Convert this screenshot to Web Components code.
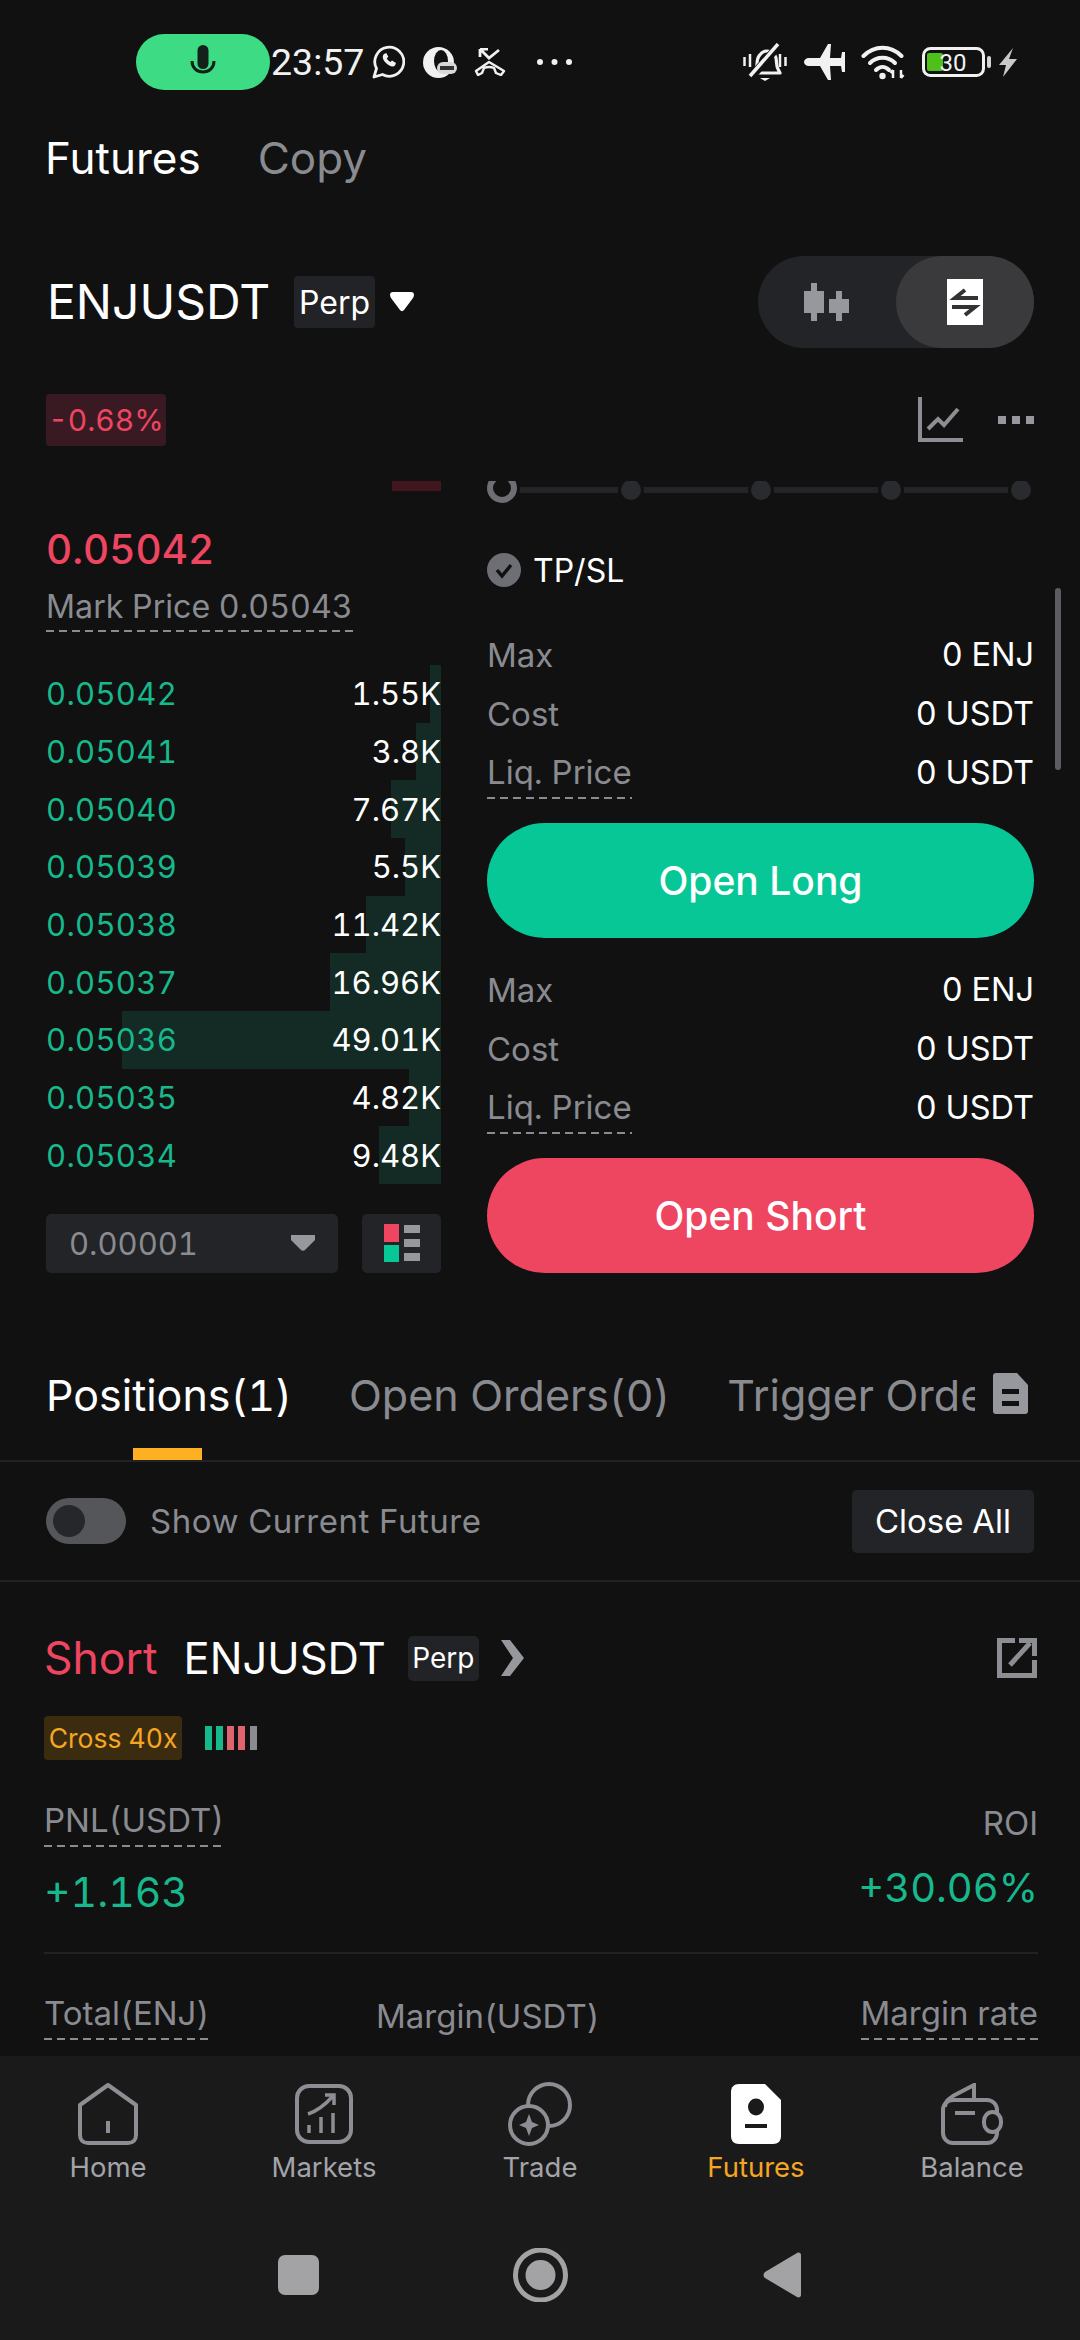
<!DOCTYPE html>
<html lang="en">
<head>
<meta charset="utf-8">
<title>Futures</title>
<style>
  html, body { margin: 0; padding: 0; background: #111112; }
  body { width: 1080px; height: 2340px; overflow: hidden; font-family: Inter, "Noto Sans", sans-serif; font-variant-numeric: tabular-nums; color: #fff; }
  app-shell { height: 2340px; }
</style>
</head>
<body>
<app-shell>
  <status-bar></status-bar>
  <top-tabs></top-tabs>
  <pair-header></pair-header>
  <trade-area></trade-area>
  <position-tabs></position-tabs>
  <position-filter></position-filter>
  <position-card></position-card>
  <bottom-nav slot="footer"></bottom-nav>
  <system-nav slot="footer"></system-nav>
</app-shell>

<script>
// shared bits
const DASH = 'background: repeating-linear-gradient(90deg, #8a8b90 0 8px, transparent 8px 13px) left bottom / 100% 2px no-repeat;';

class BaseElement extends HTMLElement {
  constructor() {
    super();
    this.attachShadow({ mode: 'open' });
  }
  connectedCallback() {
    this.shadowRoot.innerHTML = `<style>${this.styles()}</style>${this.markup()}`;
  }
  styles() { return ':host { display: block; }'; }
  markup() { return '<slot></slot>'; }
}

class AppShell extends BaseElement {
  styles() {
    return `
      :host { display: flex; flex-direction: column; }
      .body { height: 2056px; overflow: hidden; flex: none; }
      .foot { flex: 1; background: #1a1a1b; }
    `;
  }
  markup() {
    return `<div class="body"><slot></slot></div><div class="foot"><slot name="footer"></slot></div>`;
  }
}

class StatusBar extends BaseElement {
  styles() {
    return `
      :host { display: flex; align-items: center; height: 120px; padding: 0 62px 0 136px; box-sizing: border-box; color: #f1f1f1; }
      .bar { display: flex; align-items: center; width: 100%; height: 56px; margin-top: 4px; }
      .pill { width: 134px; height: 56px; border-radius: 28px; background: #3ddc84; display: flex; align-items: center; justify-content: center; flex: none; }
      .time { font: 400 37.5px Roboto, sans-serif; margin-left: 1px; width: 101px; font-variant-numeric: normal; }
      svg { display: block; flex: none; }
      .left { display: flex; align-items: center; }
      .right { margin-left: auto; display: flex; align-items: center; }
    `;
  }
  markup() {
    return `
      <div class="bar">
        <div class="pill">
          <svg width="26" height="36" viewBox="0 0 26 36" fill="none"><rect x="7.500" y="1" width="11" height="24" rx="5.500" fill="#12211a"/><path d="M2 17c0 7 5 11 11 11s11-4 11-11" stroke="#12211a" stroke-width="3"/></svg>
        </div>
        <span class="time">23:57</span>
        <div class="left">
          <svg width="33" height="34" viewBox="0 0 33 34" fill="none" stroke="#f1f1f1" stroke-width="2.800"><path d="M2 32l2.500-8.500a14.500 14.500 0 1 1 6 6z" stroke-linejoin="round"/><path d="M12 9c-2 2-1.500 5.500 2 9s7 4.500 9 2.500l1-2.500-4-2.500-1.500 1.500c-1.500-.7-3-2-3.700-3.700l1.500-1.500-2-3.800z" fill="#f1f1f1" stroke="none"/></svg>
          <svg style="margin-left:18px" width="34" height="31" viewBox="0 0 34 31"><circle cx="15.500" cy="15.500" r="15.500" fill="#f1f1f1"/><ellipse cx="18" cy="14" rx="7" ry="11" fill="#111112"/><rect x="14" y="15" width="20" height="12" rx="6" fill="#d8d8d8"/><rect x="17" y="19" width="14" height="4" fill="#333"/></svg>
          <svg style="margin-left:16px" width="34" height="28" viewBox="0 0 34 28" fill="none" stroke="#f1f1f1" stroke-width="2.800"><path d="M7 1l9 9 10-8M7 1v8M7 1h8"/><path d="M3 23L16 14l15 9-3 4-5-2-2-5q-5-2-10 0l-2 5-4 2z" stroke-linejoin="round" stroke-width="2.400"/></svg>
          <svg style="margin-left:30px" width="35" height="6" viewBox="0 0 35 6" fill="#f1f1f1"><circle cx="3" cy="3" r="3"/><circle cx="17.500" cy="3" r="3"/><circle cx="32" cy="3" r="3"/></svg>
        </div>
        <div class="right">
          <svg width="44" height="39" viewBox="0 0 44 39" fill="none" stroke="#f1f1f1"><path d="M10 30l3-4c2-4 0-9 3-13 2-3 5-5 8-5 5 0 8 3 9 7 1 5 0 8 2 11l2 4z" stroke-width="3.200" stroke-linejoin="round"/><path d="M38 0L9 33" stroke="#111112" stroke-width="8"/><path d="M35 1L7 33" stroke-width="3.500"/><path d="M17 35h10l-5 3z" fill="#f1f1f1" stroke="none"/><path d="M1.500 14v9M7 11v13M37 11v13M42.500 14v9" stroke-width="2.500"/></svg>
          <svg style="margin-left:17px" width="42" height="36" viewBox="0 0 42 36" fill="#f1f1f1"><path d="M5 14h11L24 0h3l-1 14h11l1-6h3v20h-3l-1-6H26l1 14h-3L16 22H5c-3 0-5-2-5-4s2-4 5-4z"/></svg>
          <svg style="margin-left:15px" width="46" height="36" viewBox="0 0 46 36" fill="none" stroke="#f1f1f1" stroke-width="4" stroke-linecap="round"><path d="M2.500 12c11-11 27-11 38 0"/><path d="M9 19c7-7 18-7 25 0"/><path d="M15 26c4-4 9-4 13 0"/><circle cx="21.500" cy="32" r="3.200" fill="#f1f1f1" stroke="none"/><path d="M32 34V26M29.500 29l2.500-3M40 26v8M42.500 31l-2.500 3" stroke-width="2.500" stroke-linecap="butt"/></svg>
          <svg style="margin-left:15px" width="69" height="30" viewBox="0 0 69 30" fill="none"><rect x="1.500" y="1.500" width="60" height="27" rx="7" stroke="#f1f1f1" stroke-width="3"/><rect x="5" y="6" width="16" height="18" rx="2" fill="#4fc01a"/><rect x="65" y="9" width="4" height="12" rx="2" fill="#d5d5d5"/><text x="31" y="24" font-family="Roboto, sans-serif" font-size="24" fill="#f1f1f1" text-anchor="middle">30</text></svg>
          <svg style="margin-left:7px" width="20" height="29" viewBox="0 0 20 29" fill="#c9c9c9"><path d="M15 0L1 17h7L5 29l14-18h-8z"/></svg>
        </div>
      </div>
    `;
  }
}

class TopTabs extends BaseElement {
  styles() {
    return `
      :host { display: flex; gap: 57px; height: 76px; align-items: center; padding-left: 45px; font-size: 44px; }
      .off { color: #8a8b90; }
    `;
  }
  markup() { return `<span>Futures</span><span class="off">Copy</span>`; }
}

class PairHeader extends BaseElement {
  styles() {
    return `
      :host { display: block; padding: 60px 46px 0 47px; }
      .line { display: flex; align-items: center; height: 92px; }
      .sym { font-size: 48px; width: 221px; white-space: nowrap; flex: none; margin-top: -2px; }
      .perp { margin-left: 26px; width: 81px; height: 52px; background: #222326; border-radius: 4px; display: flex; align-items: center; justify-content: center; font-size: 32px; }
      .caret { margin-left: 14px; }
      .switch { margin-left: auto; width: 276px; height: 92px; border-radius: 46px; background: #232427; display: flex; justify-content: flex-end; position: relative; }
      .switch .k { position: absolute; left: 46px; top: 27px; }
      .knob { width: 138px; height: 92px; border-radius: 46px; background: #3a3a3c; display: flex; align-items: center; justify-content: center; }
      .sub { display: flex; align-items: center; margin-top: 46px; height: 52px; }
      .chg { margin-left: -1px; width: 120px; height: 52px; background: #3a1a22; color: #ee4561; border-radius: 4px; display: flex; align-items: center; justify-content: center; font-size: 30px; }
      .chart { margin-left: auto; }
      .dots { margin-left: 35px; }
    `;
  }
  markup() {
    return `
      <div class="line">
        <span class="sym">ENJUSDT</span>
        <span class="perp">Perp</span>
        <svg class="caret" width="26" height="20" viewBox="0 0 26 20" fill="#fff"><path d="M1 3c0-2 1-3 3-3h18c2 0 3 1 3 3 0 1-.5 2-1 3L15 18c-1 1.500-3 1.500-4 0L2 6c-.5-1-1-2-1-3z"/></svg>
        <div class="switch">
          <svg class="k" width="45" height="38" viewBox="0 0 45 38" fill="#97989d"><rect x="7" y="0" width="6" height="38"/><rect x="0" y="8" width="20" height="22"/><rect x="32" y="8" width="6" height="30"/><rect x="25" y="16" width="20" height="14"/></svg>
          <div class="knob">
            <svg width="36" height="46" viewBox="0 0 36 46"><rect width="36" height="46" fill="#fff"/><path d="M18 11L8 19h23M5 28h23L18 36" fill="none" stroke="#333" stroke-width="4"/></svg>
          </div>
        </div>
      </div>
      <div class="sub">
        <span class="chg">-0.68%</span>
        <svg class="chart" width="45" height="46" viewBox="0 0 45 46" fill="none" stroke="#8d8e93" stroke-width="4"><path d="M2 0v43h43"/><path d="M10 32l10-10 6 6 14-16"/></svg>
        <svg class="dots" width="36" height="8" viewBox="0 0 36 8" fill="#97989d"><rect width="8" height="8"/><rect x="14" width="8" height="8"/><rect x="28" width="8" height="8"/></svg>
      </div>
    `;
  }
}

class BookRow extends BaseElement {
  styles() {
    return `
      :host { display: flex; position: relative; height: 57.670px; align-items: center; justify-content: space-between; font-size: 31px; }
      .fill { position: absolute; right: 0; top: 0; bottom: 0; background: #142a24; }
      span { position: relative; }
      .p { color: #17b98c; letter-spacing: 0.3px; }
    `;
  }
  markup() {
    return `<div class="fill" style="width:${this.getAttribute('w')}px"></div><span class="p">${this.getAttribute('price')}</span><span>${this.getAttribute('size')}</span>`;
  }
}

class OrderBook extends BaseElement {
  styles() {
    return `
      :host { display: block; width: 395px; flex: none; }
      .ask { width: 49px; height: 10px; background: #41161f; margin-left: auto; }
      .last { font-size: 40.500px; color: #ee4561; font-weight: 500; margin-top: 34px; line-height: 50px; }
      .mark { display: inline-block; font-size: 32.200px; color: #8a8b90; line-height: 44px; margin-top: 10px; padding-bottom: 3px; ${DASH} }
      .rows { margin-top: 33px; }
      .foot { display: flex; justify-content: space-between; margin-top: 30px; }
      .step { width: 292px; height: 59px; background: #232427; border-radius: 5px; display: flex; align-items: center; justify-content: space-between; padding: 0 23px; box-sizing: border-box; color: #8a8b90; font-size: 31px; }
      .depth { width: 79px; height: 59px; background: #232427; border-radius: 5px; display: flex; align-items: center; justify-content: center; }
    `;
  }
  markup() {
    const rows = [
      ['0.05042', '1.55K', 11], ['0.05041', '3.8K', 25], ['0.05040', '7.67K', 50],
      ['0.05039', '5.5K', 36], ['0.05038', '11.42K', 75], ['0.05037', '16.96K', 111],
      ['0.05036', '49.01K', 319], ['0.05035', '4.82K', 32], ['0.05034', '9.48K', 62]
    ].map(r => `<book-row price="${r[0]}" size="${r[1]}" w="${r[2]}"></book-row>`).join('');
    return `
      <div class="ask"></div>
      <div class="last">0.05042</div>
      <div class="mark">Mark Price 0.05043</div>
      <div class="rows">${rows}</div>
      <div class="foot">
        <div class="step"><span>0.00001</span>
          <svg width="24" height="16" viewBox="0 0 24 16" fill="#97989d"><path d="M0 0h24v5L14 15c-1 1-3 1-4 0L0 5z"/></svg>
        </div>
        <div class="depth">
          <svg width="36" height="38" viewBox="0 0 36 38"><rect width="15" height="18" fill="#ee4561"/><rect y="21" width="15" height="17" fill="#06c795"/><g fill="#97989d"><rect x="20" y="1" width="16" height="8"/><rect x="20" y="15" width="16" height="8"/><rect x="20" y="29" width="16" height="8"/></g></svg>
        </div>
      </div>
    `;
  }
}

class InfoRow extends BaseElement {
  styles() {
    return `
      :host { display: flex; justify-content: space-between; align-items: center; height: 59px; font-size: 32.500px; }
      .k { color: #8a8b90; font-size: 33px; }
      .k.dash { padding-bottom: 7px; margin-top: 5px; ${DASH} }
    `;
  }
  markup() {
    const dash = this.hasAttribute('dash') ? ' dash' : '';
    return `<span class="k${dash}">${this.getAttribute('label')}</span><span>${this.getAttribute('value')}</span>`;
  }
}

class ActionButton extends BaseElement {
  styles() {
    return `
      :host { display: flex; height: 115px; border-radius: 58px; align-items: center; justify-content: center; font-size: 39px; font-weight: 500; background: var(--btn, #06c795); }
    `;
  }
}

class OrderPanel extends BaseElement {
  styles() {
    return `
      :host { display: block; width: 547px; flex: none; position: relative; }
      .slider { display: flex; align-items: center; height: 20px; margin-top: -1px; position: relative; }
      .track { position: absolute; left: 10px; right: 10px; top: 7px; height: 6px; background: #232427; }
      .slider i { display: block; width: 20px; height: 20px; border-radius: 50%; background: #2a2b2e; box-shadow: 0 0 0 3px #111112; position: absolute; top: 0; }
      .slider i.first { left: 0; background: #111112; border: 6px solid #6e6f74; box-sizing: border-box; width: 30px; height: 30px; top: -7px; }
      .tp { display: flex; align-items: center; gap: 12px; margin-top: 50px; height: 40px; font-size: 32px; }
      .info { margin-top: 35px; }
      .info2 { margin-top: 22px; }
      action-button { margin-top: 21px; }
      .bar { position: absolute; right: -27px; top: 107px; width: 6px; height: 182px; border-radius: 3px; background: #5c5d61; }
    `;
  }
  markup() {
    return `
      <div class="slider"><div class="track"></div>
        <i class="first"></i><i style="left:134px"></i><i style="left:264px"></i><i style="left:394px"></i><i style="left:524px"></i>
      </div>
      <div class="tp">
        <svg width="34" height="34" viewBox="0 0 34 34"><circle cx="17" cy="17" r="17" fill="#6e6f74"/><path d="M10 17l5 6 9-11" fill="none" stroke="#111112" stroke-width="3.500"/></svg>
        <span>TP/SL</span>
      </div>
      <div class="info">
        <info-row label="Max" value="0 ENJ"></info-row>
        <info-row label="Cost" value="0 USDT"></info-row>
        <info-row label="Liq. Price" value="0 USDT" dash></info-row>
      </div>
      <action-button>Open Long</action-button>
      <div class="info2">
        <info-row label="Max" value="0 ENJ"></info-row>
        <info-row label="Cost" value="0 USDT"></info-row>
        <info-row label="Liq. Price" value="0 USDT" dash></info-row>
      </div>
      <action-button style="--btn:#ee4561">Open Short</action-button>
      <div class="bar"></div>
    `;
  }
}

class TradeArea extends BaseElement {
  styles() {
    return `
      :host { display: flex; gap: 46px; margin-top: 35px; padding: 0 46px; height: 824px; overflow: hidden; }
    `;
  }
  markup() { return `<order-book></order-book><order-panel></order-panel>`; }
}

class PositionTabs extends BaseElement {
  styles() {
    return `
      :host { display: block; position: relative; height: 157px; border-bottom: 2px solid #212225; box-sizing: border-box; font-size: 43px; }
      .row { display: flex; gap: 57px; padding: 64px 0 0 46px; width: 975px; box-sizing: border-box; overflow: hidden; white-space: nowrap; line-height: 52px; color: #8a8b90; }
      .on { color: #fff; }
      .mark { position: absolute; left: 133px; bottom: 0; width: 69px; height: 12px; background: #fdb022; }
      svg { position: absolute; left: 993px; top: 68px; }
    `;
  }
  markup() {
    return `
      <div class="row"><span class="on">Positions(1)</span><span>Open Orders(0)</span><span>Trigger Orders(0)</span></div>
      <div class="mark"></div>
      <svg width="35" height="41" viewBox="0 0 35 41" fill="#97989d"><path d="M3 0h21l11 12v26c0 2-1 3-3 3H3c-2 0-3-1-3-3V3c0-2 1-3 3-3z"/><rect x="9" y="16" width="17" height="5" fill="#111112"/><rect x="9" y="28" width="17" height="5" fill="#111112"/></svg>
    `;
  }
}

class PositionFilter extends BaseElement {
  styles() {
    return `
      :host { display: flex; align-items: center; height: 120px; padding: 0 46px; border-bottom: 2px solid #212225; box-sizing: border-box; }
      .toggle { width: 80px; height: 46px; border-radius: 23px; background: #55565a; position: relative; flex: none; }
      .toggle::after { content: ''; position: absolute; left: 7px; top: 7px; width: 32px; height: 32px; border-radius: 50%; background: #26272a; }
      .label { margin-left: 24px; color: #8a8b90; font-size: 33px; letter-spacing: 0.5px; }
      .close { margin-left: auto; width: 182px; height: 63px; background: #232427; border-radius: 5px; display: flex; align-items: center; justify-content: center; font-size: 33px; }
    `;
  }
  markup() {
    return `<div class="toggle"></div><span class="label">Show Current Future</span><div class="close">Close All</div>`;
  }
}

class PositionCard extends BaseElement {
  styles() {
    return `
      :host { display: block; padding: 53px 42px 0 44px; }
      .head { display: flex; align-items: center; height: 46px; font-size: 44.500px; }
      .sym { margin-left: 26px; font-size: 43.500px; }
      .perp { margin-left: 22px; width: 71px; height: 45px; background: #222326; border-radius: 5px; display: flex; align-items: center; justify-content: center; font-size: 28px; }
      .short { color: #ee4561; }
      .chev { margin-left: 22px; }
      .share { margin-left: auto; margin-right: 1px; }
      .tags { display: flex; align-items: center; margin-top: 35px; }
      .cross { height: 44px; width: 138px; background: #3b2c10; color: #f5a623; border-radius: 4px; display: flex; align-items: center; justify-content: center; font-size: 26.500px; }
      .lev { margin-left: 23px; }
      .stats { display: flex; justify-content: space-between; margin-top: 38px; }
      .col-r { text-align: right; }
      .lbl { display: inline-block; color: #8a8b90; font-size: 33px; line-height: 44px; white-space: nowrap; }
      .dash { padding-bottom: 5px; ${DASH} }
      .val { color: #17b98c; font-weight: 400; line-height: 50px; }
      .col-l .val { margin-top: 20px; font-size: 41px; }
      .col-r .lbl { margin-top: 3px; }
      .col-r .val { margin-top: 18px; font-size: 40px; }
      hr { border: 0; height: 2px; background: #212225; margin: 35px 0 0; }
      .grid { display: grid; grid-template-columns: 332px 1fr auto; margin-top: 37px; }
      .grid .mid { margin-top: 3px; }
    `;
  }
  markup() {
    return `
      <div class="head">
        <span class="short">Short</span><span class="sym">ENJUSDT</span><span class="perp">Perp</span>
        <svg class="chev" width="23" height="36" viewBox="0 0 23 36" fill="#97989d"><path d="M0 0h9l14 18-14 18H0l12-18z"/></svg>
        <svg class="share" width="40" height="40" viewBox="0 0 40 40" fill="none" stroke="#8d8e93" stroke-width="5"><path d="M18 2.500H2.500v35h35V22"/><path d="M13 27L33 5"/><path d="M22 2.500h15.500V18"/></svg>
      </div>
      <div class="tags">
        <span class="cross">Cross 40x</span>
        <svg class="lev" width="53" height="24" viewBox="0 0 53 24"><rect width="7" height="24" fill="#17b98c"/><rect x="11" width="7" height="24" fill="#17b98c"/><rect x="22" width="7" height="24" fill="#e0646f"/><rect x="33" width="7" height="24" fill="#e0646f"/><rect x="45" width="7" height="24" fill="#8a8b90"/></svg>
      </div>
      <div class="stats">
        <div class="col-l"><span class="lbl dash">PNL(USDT)</span><div class="val">+1.163</div></div>
        <div class="col-r"><span class="lbl">ROI</span><div class="val">+30.06%</div></div>
      </div>
      <hr>
      <div class="grid">
        <div><span class="lbl dash">Total(ENJ)</span></div>
        <div class="mid"><span class="lbl">Margin(USDT)</span></div>
        <div><span class="lbl dash">Margin rate</span></div>
      </div>
    `;
  }
}

class NavItem extends BaseElement {
  styles() {
    return `
      :host { display: flex; flex-direction: column; align-items: center; font-size: 27.500px; color: #a3a4a8; }
      :host([active]) { color: #f5a623; }
      .ic { height: 66px; display: flex; align-items: center; justify-content: center; }
      .t { margin-top: 2px; line-height: 36px; }
    `;
  }
  markup() {
    return `<div class="ic"><slot></slot></div><div class="t">${this.getAttribute('label')}</div>`;
  }
}

class BottomNav extends BaseElement {
  styles() {
    return `
      :host { display: grid; grid-template-columns: repeat(5, 216px); padding-top: 25px; height: 154px; box-sizing: border-box; }
      svg { display: block; }
    `;
  }
  markup() {
    return `
      <nav-item label="Home"><svg width="60" height="62" viewBox="0 0 60 62" fill="none" stroke="#8d8e93" stroke-width="4" stroke-linejoin="round"><path d="M30 2L2 22v30c0 5 3 8 8 8h40c5 0 8-3 8-8V22z"/><path d="M30 38v12"/></svg></nav-item>
      <nav-item label="Markets"><svg width="58" height="60" viewBox="0 0 58 60" fill="none" stroke="#8d8e93" stroke-width="4"><rect x="2" y="2" width="54" height="56" rx="12"/><path d="M13 30c9-3 17-9 25-18M30 11h9v10" stroke-width="3.500"/><path d="M14 49v-8M26 49V33M38 49V29" stroke-width="3.500"/></svg></nav-item>
      <nav-item label="Trade"><svg width="64" height="64" viewBox="0 0 64 64" fill="none" stroke="#8d8e93" stroke-width="4"><circle cx="41" cy="23" r="21"/><circle cx="21" cy="43" r="19" fill="#1a1a1b"/><path d="M21 32l3 8 7 3-7 3-3 8-3-8-7-3 7-3z" fill="#8d8e93" stroke="none"/></svg></nav-item>
      <nav-item label="Futures" active><svg width="50" height="60" viewBox="0 0 50 60"><path d="M8 0h26l16 16v36c0 5-3 8-8 8H8c-5 0-8-3-8-8V8c0-5 3-8 8-8z" fill="#fff"/><ellipse cx="25" cy="23" rx="8" ry="8.500" fill="#1a1a1b"/><rect x="14" y="40" width="22" height="4" fill="#1a1a1b"/></svg></nav-item>
      <nav-item label="Balance"><svg width="62" height="62" viewBox="0 0 62 62" fill="none" stroke="#8d8e93" stroke-width="4"><path d="M4 24c0-6 4-8 8-11L33 2v15"/><rect x="2" y="17" width="54" height="43" rx="10"/><path d="M14 30h20"/><rect x="43" y="29" width="17" height="20" rx="9" fill="#1a1a1b"/></svg></nav-item>
    `;
  }
}

class SystemNav extends BaseElement {
  styles() {
    return `
      :host { display: grid; grid-template-columns: repeat(3, 242px); justify-content: center; justify-items: center; align-items: center; height: 130px; }
      svg { display: block; }
    `;
  }
  markup() {
    return `
      <svg width="41" height="40" viewBox="0 0 41 40"><rect width="41" height="40" rx="7" fill="#a3a3a5"/></svg>
      <svg width="55" height="54" viewBox="0 0 55 54" fill="none"><circle cx="27.500" cy="27" r="25" stroke="#a3a3a5" stroke-width="5"/><circle cx="27.500" cy="27" r="15" fill="#a3a3a5"/></svg>
      <svg width="38" height="46" viewBox="0 0 38 46"><path d="M38 3v40c0 2-2 3-4 2L2 26c-2-1.500-2-4 0-6L34 1c2-1 4 0 4 2z" fill="#a3a3a5"/></svg>
    `;
  }
}

customElements.define('app-shell', AppShell);
customElements.define('status-bar', StatusBar);
customElements.define('top-tabs', TopTabs);
customElements.define('pair-header', PairHeader);
customElements.define('book-row', BookRow);
customElements.define('order-book', OrderBook);
customElements.define('info-row', InfoRow);
customElements.define('action-button', ActionButton);
customElements.define('order-panel', OrderPanel);
customElements.define('trade-area', TradeArea);
customElements.define('position-tabs', PositionTabs);
customElements.define('position-filter', PositionFilter);
customElements.define('position-card', PositionCard);
customElements.define('nav-item', NavItem);
customElements.define('bottom-nav', BottomNav);
customElements.define('system-nav', SystemNav);
</script>
</body>
</html>
